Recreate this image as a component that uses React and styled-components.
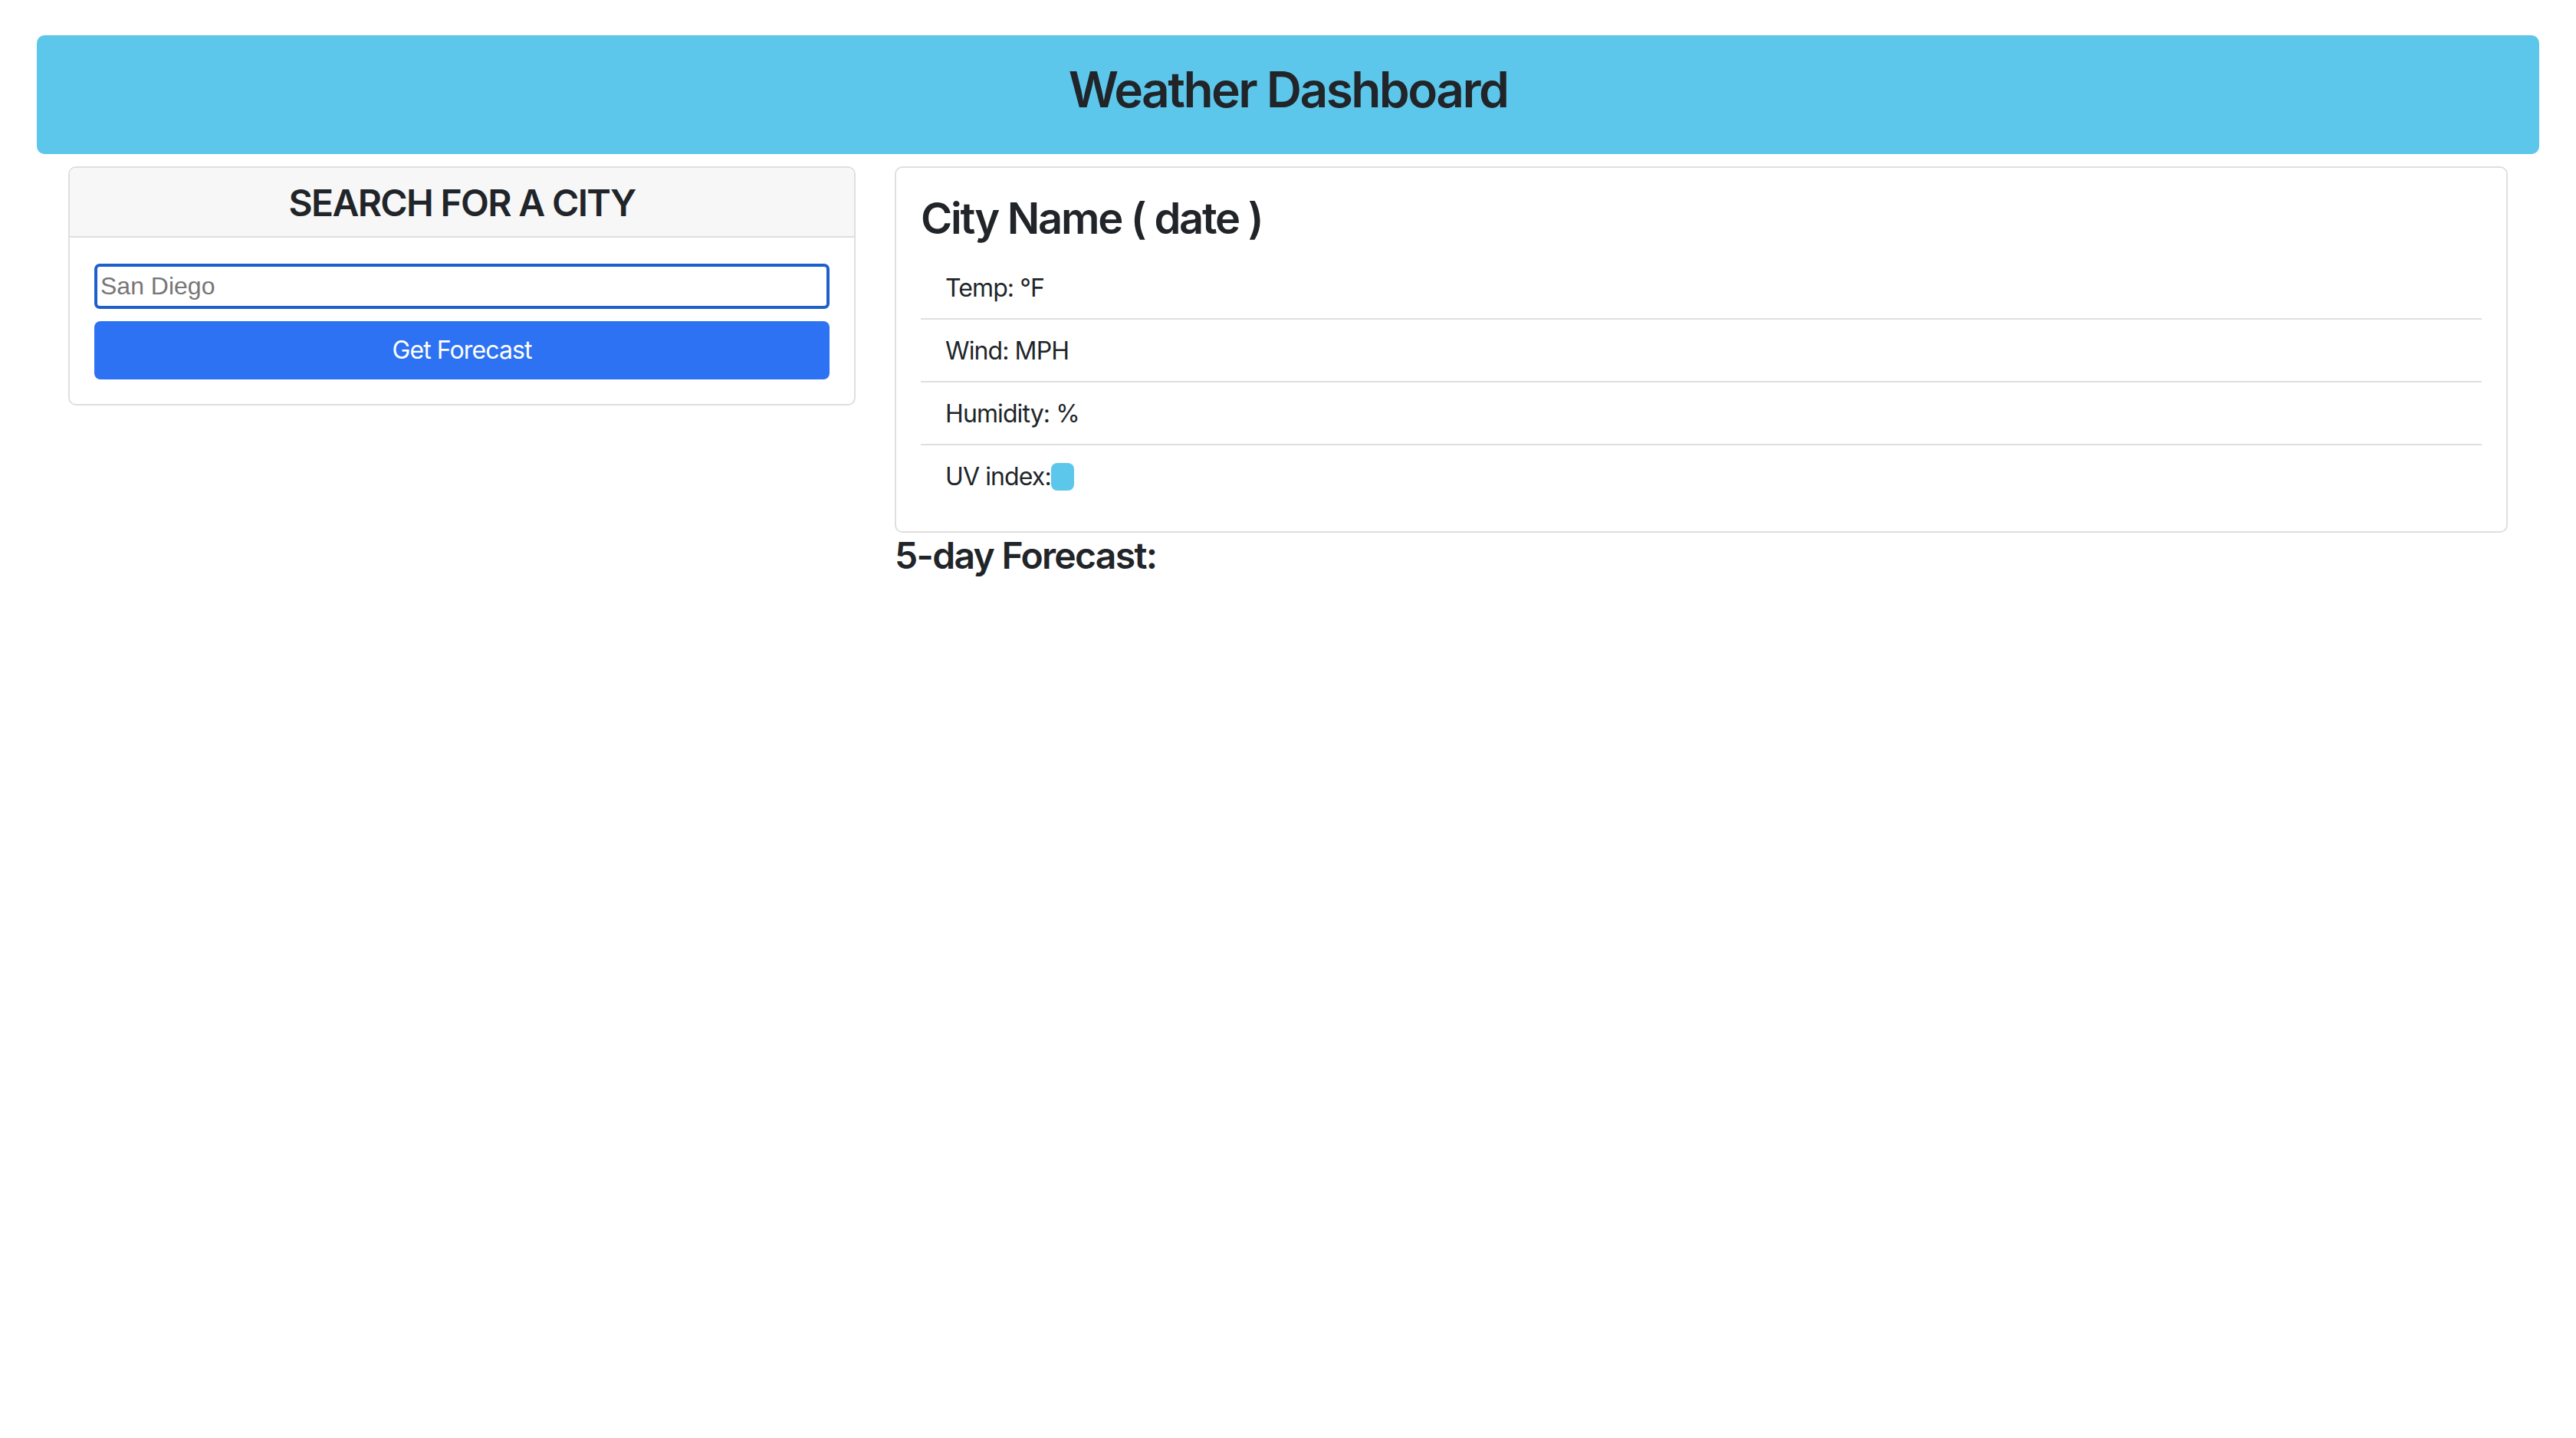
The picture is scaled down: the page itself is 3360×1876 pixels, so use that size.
import React from "react";
import styled, { createGlobalStyle } from "styled-components";

const GlobalStyle = createGlobalStyle`
  html, body {
    margin: 0;
    padding: 0;
    background: #ffffff;
  }
  body {
    font-family: Inter, "Liberation Sans", Arial, sans-serif;
    font-size: 32px;
    line-height: 1.5;
    letter-spacing: -0.028em;
    color: #212529;
  }
  *, *::before, *::after { box-sizing: border-box; }
`;

const Page = styled.div`
  padding: 46px 48px 0 48px;
`;

const Banner = styled.header`
  background: #5dc7eb;
  border-radius: 10px;
  padding: 33px 0 29px;
  text-align: center;
`;

const Title = styled.h2`
  margin: 0 0 16px;
  font-size: 64px;
  font-weight: 600;
  line-height: 1.2;
  letter-spacing: -0.04em;
  color: #212529;
`;

const Row = styled.div`
  display: grid;
  grid-template-columns: 1027px 1fr;
  gap: 51px;
  padding: 16px 41px 0 41px;
  align-items: start;
`;

const Card = styled.section`
  border: 2px solid #dfdfdf;
  border-radius: 10px;
  background: #fff;
  overflow: hidden;
`;

const CardHeader = styled.div`
  background: #f7f7f7;
  border-bottom: 2px solid #dfdfdf;
  padding: 17px 32px 15px;
  text-align: center;
`;

const H4 = styled.h4`
  margin: 0;
  font-size: 48px;
  font-weight: 600;
  line-height: 1.2;
  letter-spacing: -0.035em;
  color: #212529;
`;

const CardBody = styled.div`
  padding: 32px;
  display: flex;
  flex-direction: column;
`;

const CityInput = styled.input`
  width: 100%;
  height: 59px;
  margin: 2px 0 16px;
  border: 4px solid #1f5fcc;
  border-radius: 7px;
  padding: 0 4px;
  font-family: "Liberation Sans", Arial, sans-serif;
  font-size: 32px;
  color: #212529;
  outline: none;
  &::placeholder { color: #767676; }
`;

const Button = styled.button`
  width: 100%;
  height: 76px;
  border: none;
  border-radius: 8px;
  background: #2d72f2;
  color: #ffffff;
  font-family: Inter, "Liberation Sans", Arial, sans-serif;
  font-size: 32px;
  line-height: 1.5;
  letter-spacing: -0.028em;
  cursor: pointer;
`;

const MainCol = styled.div`
  display: flex;
  flex-direction: column;
`;

const CityTitle = styled.h3`
  margin: 1px 0 16px;
  font-size: 56px;
  font-weight: 600;
  line-height: 1.2;
  letter-spacing: -0.04em;
  color: #212529;
`;

const List = styled.ul`
  list-style: none;
  margin: 0;
  padding: 0;
`;

const Item = styled.li`
  display: flex;
  align-items: center;
  padding: 17px 32px 15px;
  line-height: 48px;
  border-bottom: 2px solid #dfdfdf;
  &:last-child { border-bottom: none; }
`;

const Badge = styled.span`
  display: inline-block;
  width: 30px;
  height: 36px;
  border-radius: 8px;
  background: #5dc7eb;
`;

const Forecast = styled.h4`
  margin: 1px 0 0;
  font-size: 48px;
  font-weight: 600;
  line-height: 1.2;
  letter-spacing: -0.035em;
  color: #212529;
`;

export default function App() {
  return (
    <>
      <GlobalStyle />
      <Page>
        <Banner>
          <Title>Weather Dashboard</Title>
        </Banner>
        <Row>
          <Card>
            <CardHeader>
              <H4>SEARCH FOR A CITY</H4>
            </CardHeader>
            <CardBody>
              <CityInput placeholder="San Diego" />
              <Button>Get Forecast</Button>
            </CardBody>
          </Card>
          <MainCol>
            <Card>
              <CardBody>
                <CityTitle>City Name ( date )</CityTitle>
                <List>
                  <Item>Temp: °F</Item>
                  <Item>Wind: MPH</Item>
                  <Item>Humidity: %</Item>
                  <Item>
                    UV index:<Badge />
                  </Item>
                </List>
              </CardBody>
            </Card>
            <Forecast>5-day Forecast:</Forecast>
          </MainCol>
        </Row>
      </Page>
    </>
  );
}
